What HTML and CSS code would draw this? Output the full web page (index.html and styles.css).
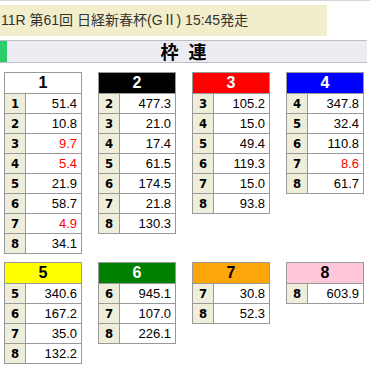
FILE: index.html
```html
<!DOCTYPE html>
<html lang="ja">
<head>
<meta charset="utf-8">
<title>枠連</title>
<link rel="stylesheet" href="styles.css">
</head>
<body>
<div class="rule"></div>
<div class="race">11R 第61回 日経新春杯(GⅡ) 15:45発走</div>
<div class="titlebar"><span class="mark"></span><span class="title">枠 連</span></div>
<div class="grid">
  <table class="odds">
    <colgroup><col class="cn"><col class="cv"></colgroup>
    <tr><th colspan="2" class="w1">1</th></tr>
    <tr><td class="n">1</td><td class="v">51.4</td></tr>
    <tr><td class="n">2</td><td class="v">10.8</td></tr>
    <tr><td class="n">3</td><td class="v hot">9.7</td></tr>
    <tr><td class="n">4</td><td class="v hot">5.4</td></tr>
    <tr><td class="n">5</td><td class="v">21.9</td></tr>
    <tr><td class="n">6</td><td class="v">58.7</td></tr>
    <tr><td class="n">7</td><td class="v hot">4.9</td></tr>
    <tr><td class="n">8</td><td class="v">34.1</td></tr>
  </table>
  <table class="odds">
    <colgroup><col class="cn"><col class="cv"></colgroup>
    <tr><th colspan="2" class="w2">2</th></tr>
    <tr><td class="n">2</td><td class="v">477.3</td></tr>
    <tr><td class="n">3</td><td class="v">21.0</td></tr>
    <tr><td class="n">4</td><td class="v">17.4</td></tr>
    <tr><td class="n">5</td><td class="v">61.5</td></tr>
    <tr><td class="n">6</td><td class="v">174.5</td></tr>
    <tr><td class="n">7</td><td class="v">21.8</td></tr>
    <tr><td class="n">8</td><td class="v">130.3</td></tr>
  </table>
  <table class="odds">
    <colgroup><col class="cn"><col class="cv"></colgroup>
    <tr><th colspan="2" class="w3">3</th></tr>
    <tr><td class="n">3</td><td class="v">105.2</td></tr>
    <tr><td class="n">4</td><td class="v">15.0</td></tr>
    <tr><td class="n">5</td><td class="v">49.4</td></tr>
    <tr><td class="n">6</td><td class="v">119.3</td></tr>
    <tr><td class="n">7</td><td class="v">15.0</td></tr>
    <tr><td class="n">8</td><td class="v">93.8</td></tr>
  </table>
  <table class="odds">
    <colgroup><col class="cn"><col class="cv"></colgroup>
    <tr><th colspan="2" class="w4">4</th></tr>
    <tr><td class="n">4</td><td class="v">347.8</td></tr>
    <tr><td class="n">5</td><td class="v">32.4</td></tr>
    <tr><td class="n">6</td><td class="v">110.8</td></tr>
    <tr><td class="n">7</td><td class="v hot">8.6</td></tr>
    <tr><td class="n">8</td><td class="v">61.7</td></tr>
  </table>
  <table class="odds">
    <colgroup><col class="cn"><col class="cv"></colgroup>
    <tr><th colspan="2" class="w5">5</th></tr>
    <tr><td class="n">5</td><td class="v">340.6</td></tr>
    <tr><td class="n">6</td><td class="v">167.2</td></tr>
    <tr><td class="n">7</td><td class="v">35.0</td></tr>
    <tr><td class="n">8</td><td class="v">132.2</td></tr>
  </table>
  <table class="odds">
    <colgroup><col class="cn"><col class="cv"></colgroup>
    <tr><th colspan="2" class="w6">6</th></tr>
    <tr><td class="n">6</td><td class="v">945.1</td></tr>
    <tr><td class="n">7</td><td class="v">107.0</td></tr>
    <tr><td class="n">8</td><td class="v">226.1</td></tr>
  </table>
  <table class="odds">
    <colgroup><col class="cn"><col class="cv"></colgroup>
    <tr><th colspan="2" class="w7">7</th></tr>
    <tr><td class="n">7</td><td class="v">30.8</td></tr>
    <tr><td class="n">8</td><td class="v">52.3</td></tr>
  </table>
  <table class="odds">
    <colgroup><col class="cn"><col class="cv"></colgroup>
    <tr><th colspan="2" class="w8">8</th></tr>
    <tr><td class="n">8</td><td class="v">603.9</td></tr>
  </table>
</div>
</body>
</html>
```
FILE: styles.css
```css
html, body {
  margin: 0;
  padding: 0;
  background: #ffffff;
}
body {
  width: 370px;
  font-family: "Liberation Sans", "Noto Sans CJK JP", sans-serif;
}
.rule {
  height: 1px;
  background: #d6d6d6;
  margin-bottom: 4px;
}
.race {
  width: 326px;
  height: 31px;
  line-height: 31px;
  padding-left: 1px;
  background: #f2eecb;
  color: #333333;
  font-size: 14px;
  white-space: nowrap;
  font-family: "Liberation Sans", "Noto Sans CJK JP", sans-serif;
}
.titlebar {
  margin-top: 4px;
  width: 367px;
  height: 21px;
  border-top: 1px solid #bdbdc6;
  border-bottom: 1px solid #bdbdc6;
  background: #eeecf3;
  display: flex;
  align-items: stretch;
}
.mark {
  width: 7px;
  background: #2ecc6a;
}
.title {
  flex: 1;
  text-align: center;
  font-size: 18px;
  font-weight: bold;
  line-height: 21px;
  color: #000;
  padding-right: 7px;
  word-spacing: 6px;
  font-family: "Noto Sans CJK JP", sans-serif;
}
.grid {
  margin-top: 9px;
  padding-left: 4px;
  display: flex;
  flex-wrap: wrap;
  align-items: flex-start;
  column-gap: 16px;
  row-gap: 8px;
  width: 366px;
}
.odds {
  border-collapse: collapse;
  width: 77px;
  table-layout: fixed;
}
.odds .cn {
  width: 21px;
}
.odds .cv {
  width: 56px;
}
.odds th,
.odds td {
  border: 1px solid #999999;
  padding: 0;
}
.odds th {
  height: 20px;
  font-size: 16px;
  font-weight: bold;
  text-align: center;
  line-height: 20px;
}
.odds td {
  height: 19px;
  line-height: 19px;
}
.odds .n {
  background: #eeeedb;
  text-align: center;
  font-weight: bold;
  font-size: 13px;
  color: #000;
  font-family: "DejaVu Sans Condensed", "Liberation Sans Narrow", "Liberation Sans", sans-serif;
}
.odds .v {
  background: #ffffff;
  text-align: right;
  padding-right: 4px;
  font-size: 13px;
  color: #000;
}
.odds .v.hot {
  color: #ff0000;
}
.w1 { background: #ffffff; color: #000; }
.w2 { background: #000000; color: #fff; }
.w3 { background: #ff0000; color: #fff; }
.w4 { background: #0000ff; color: #fff; }
.w5 { background: #ffff00; color: #000; }
.w6 { background: #008000; color: #fff; }
.w7 { background: #fca60a; color: #000; }
.w8 { background: #ffc8d8; color: #000; }
```
